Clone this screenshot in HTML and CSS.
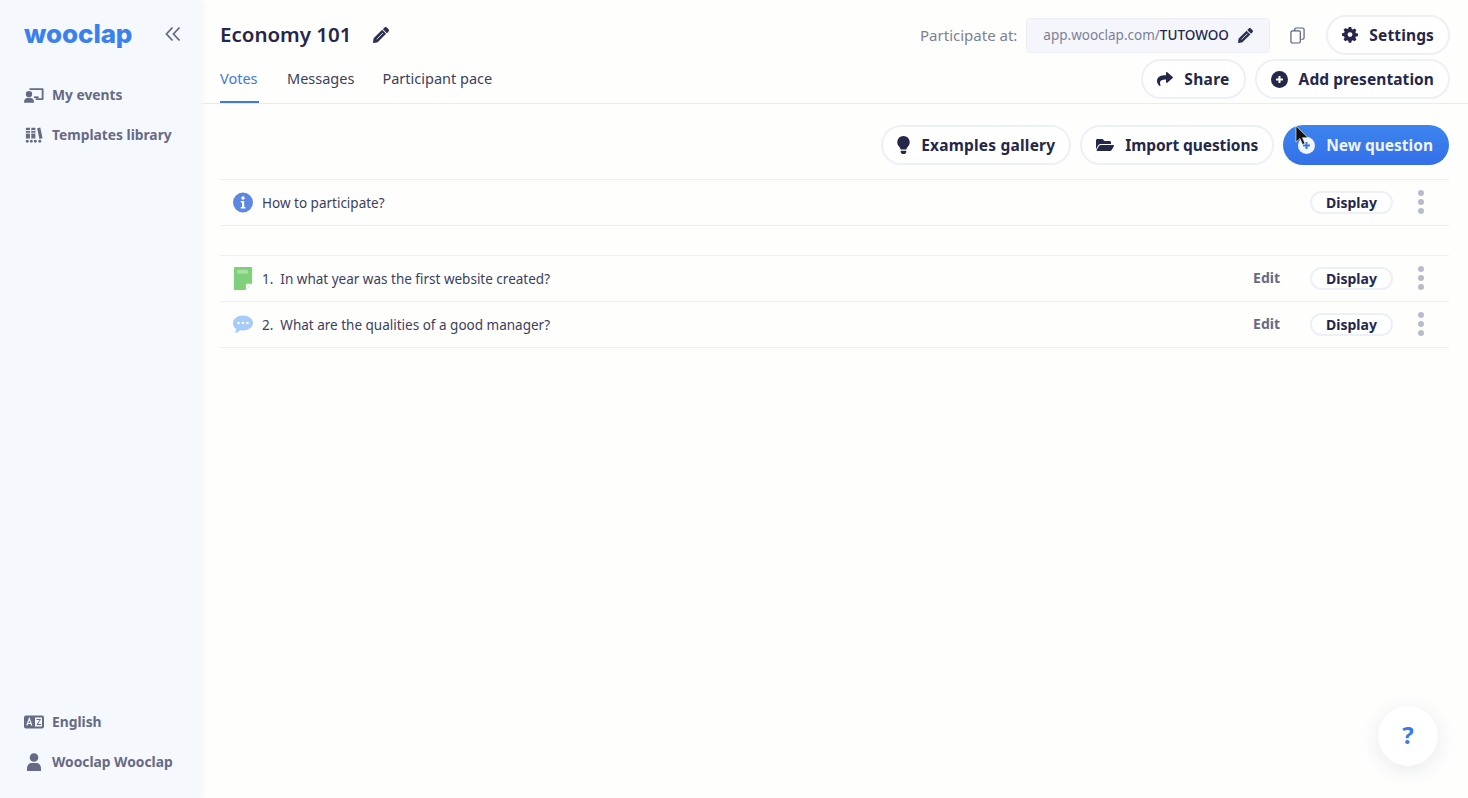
FILE: index.html
```html
<!DOCTYPE html>
<html lang="en">
<head>
<meta charset="utf-8">
<title>Wooclap - Economy 101</title>
<link rel="stylesheet" href="styles.css">
</head>
<body>
<div class="app">
  <aside class="sidebar">
    <div class="brand">
      <span class="logo">wooclap</span>
      <svg class="collapse" viewBox="0 0 16 16" width="16" height="16"><path d="M7.500 1.500 1.500 8l6 6.500M14.500 1.500 8.500 8l6 6.500" fill="none" stroke="#666a85" stroke-width="1.800"/></svg>
    </div>
    <nav class="side-nav">
      <a class="side-link">
        <svg class="side-icon" viewBox="0 0 22 18"><path d="M6 1.500h14.500a1 1 0 0 1 1 1v11a1 1 0 0 1-1 1H13v-2h6.500V3.500H6z" fill="#666a85"/><circle cx="5.500" cy="8" r="3.500" fill="#666a85"/><path d="M0 17c0-3.500 2-5 5.500-5s5.500 1.500 5.500 5v.500H0z" fill="#666a85"/><rect x="11" y="10.500" width="5" height="2" fill="#666a85"/></svg>
        <span>My events</span>
      </a>
      <a class="side-link">
        <svg class="side-icon side-icon-narrow" viewBox="0 0 20 18"><path d="M1 1h4.500v12H1zM7 1h4.500v12H7zM13.500 1.500l3.500-.8 2.500 12-3.500.8z" fill="#666a85"/><path d="M1 4h4.500M1 7h4.500M7 4h4.500M7 7h4.500" stroke="#f5f8fd" stroke-width="1"/><circle cx="2.500" cy="16" r="1.600" fill="#666a85"/><circle cx="7" cy="16" r="1.600" fill="#666a85"/><circle cx="11.500" cy="16" r="1.600" fill="#666a85"/><circle cx="16.500" cy="16" r="1.600" fill="#666a85"/></svg>
        <span>Templates library</span>
      </a>
    </nav>
    <nav class="side-nav side-bottom">
      <a class="side-link">
        <svg class="side-icon" viewBox="0 0 20 13"><rect width="20" height="13" rx="2" fill="#666a85"/><rect x="11" y="2" width="7" height="9" fill="#f5f8fd"/><path d="M2.800 10 5.300 3l2.500 7M3.800 8h3" fill="none" stroke="#f5f8fd" stroke-width="1.200"/><path d="M12.500 4h4l-3.500 5h4" fill="none" stroke="#666a85" stroke-width="1"/></svg>
        <span>English</span>
      </a>
      <a class="side-link">
        <svg class="side-icon" viewBox="0 0 20 18"><circle cx="10" cy="4.500" r="4.300" fill="#666a85"/><path d="M3 18v-2.500C3 12 5 10 8 10h4c3 0 5 2 5 5.500V18z" fill="#666a85"/></svg>
        <span>Wooclap Wooclap</span>
      </a>
    </nav>
  </aside>

  <main class="main">
    <header class="header">
      <div class="header-top">
        <h1 class="title">Economy 101</h1>
        <svg class="edit-title" viewBox="0 0 512 512" width="16" height="16"><path class="pen" d="M497.900 142.100l-46.100 46.100c-4.700 4.700-12.300 4.700-17 0l-111-111c-4.700-4.700-4.700-12.300 0-17l46.100-46.100c18.700-18.700 49.100-18.700 67.900 0l60.100 60.100c18.800 18.700 18.800 49.100 0 67.900zM284.200 99.800L21.600 362.400.4 483.900c-2.900 16.400 11.400 30.600 27.800 27.800l121.500-21.300 262.600-262.600c4.700-4.700 4.700-12.300 0-17l-111-111c-4.800-4.700-12.400-4.700-17.100 0z"/><path class="pen-line" d="M120 392 320 192"/></svg>
        <div class="participate">
          <span class="participate-label">Participate at:</span>
          <div class="url-box">
            <span class="url-host">app.wooclap.com/</span><span class="url-code">TUTOWOO</span>
            <svg class="url-pen" viewBox="0 0 512 512" width="15" height="15"><path class="pen" d="M497.900 142.100l-46.100 46.100c-4.700 4.700-12.300 4.700-17 0l-111-111c-4.700-4.700-4.700-12.300 0-17l46.100-46.100c18.700-18.700 49.100-18.700 67.900 0l60.100 60.100c18.800 18.700 18.800 49.100 0 67.900zM284.200 99.800L21.600 362.400.4 483.900c-2.900 16.400 11.400 30.600 27.800 27.800l121.500-21.300 262.600-262.600c4.700-4.700 4.700-12.300 0-17l-111-111c-4.800-4.700-12.400-4.700-17.100 0z"/><path class="pen-line" d="M120 392 320 192"/></svg>
          </div>
          <svg class="copy" viewBox="0 0 16 18" width="15" height="17"><path d="M5 3.500V2.500A1.500 1.500 0 0 1 6.500 1h7A1.500 1.500 0 0 1 15 2.500v9a1.500 1.500 0 0 1-1.500 1.500H12M2.500 4h7A1.500 1.500 0 0 1 11 5.500v10A1.500 1.500 0 0 1 9.500 17h-7A1.500 1.500 0 0 1 1 15.500v-10A1.500 1.500 0 0 1 2.500 4z" fill="none" stroke="#5b5f7a" stroke-width="1.300"/></svg>
          <button class="btn text-settings">
            <svg class="btn-icon" viewBox="0 0 20 20"><path d="M8.300 0h3.400l.6 2.800 1.500.7 2.500-1.400 2.400 2.400-1.500 2.400.7 1.600 2.800.6v3.400l-2.800.6-.7 1.500 1.500 2.500-2.400 2.400-2.500-1.500-1.500.6-.6 2.800H8.300l-.6-2.800-1.500-.6-2.500 1.500-2.400-2.400 1.500-2.500-.7-1.500L-.7 11.900V8.500l2.800-.6.7-1.600-1.500-2.400 2.400-2.400 2.500 1.400 1.500-.7z" transform="translate(.7 -.2) scale(.93)"/><circle cx="10" cy="9.500" r="3" fill="#fff"/></svg>
            Settings
          </button>
        </div>
      </div>
      <div class="header-bottom">
        <div class="tabs">
          <a class="tab tab-active">Votes</a>
          <a class="tab">Messages</a>
          <a class="tab">Participant pace</a>
        </div>
        <div class="header-actions">
          <button class="btn text-loose-sm">
            <svg class="btn-icon" viewBox="0 0 512 512"><path d="M503.700 189.800L327.700 37.900C312.300 24.500 288 35.300 288 56v80.100C127.400 137.900 0 170.100 0 322.300c0 61.400 39.600 122.300 83.300 154.100 13.700 9.900 33.100-2.500 28.100-18.600C66 312.800 132.900 274.300 288 272.100V360c0 20.700 24.300 31.500 39.700 18.200l176-152c11.100-9.600 11.100-26.800 0-36.400z"/></svg>
            Share
          </button>
          <button class="btn text-add">
            <svg class="btn-icon btn-icon-circle" viewBox="1.500 1.500 17 17"><circle cx="10" cy="10" r="8.500"/><path d="M10 6.500v7M6.500 10h7" stroke="#fff" stroke-width="2"/></svg>
            Add presentation
          </button>
        </div>
      </div>
    </header>

    <div class="toolbar">
      <button class="btn text-loose">
        <svg class="btn-icon btn-icon-slim" viewBox="0 0 352 512"><path d="M96.060 454.350c.01 6.290 1.870 12.450 5.370 17.690l17.090 25.690a31.990 31.990 0 0 0 26.640 14.280h61.710a31.990 31.990 0 0 0 26.640-14.280l17.090-25.690a31.890 31.890 0 0 0 5.360-17.690l.04-38.350H96.010l.05 38.350zM0 176c0 44.370 16.450 84.850 43.560 115.780 16.520 18.850 42.360 58.230 52.210 91.450.04.260.07.520.11.780h160.240c.04-.26.070-.51.110-.78 9.850-33.220 35.690-72.600 52.210-91.450C335.550 260.850 352 220.370 352 176 352 78.610 272.900-.3 175.450 0 73.440.31 0 82.970 0 176z"/></svg>
        Examples gallery
      </button>
      <button class="btn text-tight">
        <svg class="btn-icon btn-icon-wide" viewBox="0 0 576 512"><path d="M572.694 292.093L500.270 416.248A63.997 63.997 0 0 1 444.989 448H45.025c-18.523 0-30.064-20.093-20.731-36.093l72.424-124.155A64 64 0 0 1 152 256h399.964c18.523 0 30.064 20.093 20.730 36.093zM152 224h328v-48c0-26.510-21.490-48-48-48H272l-64-64H48C21.490 64 0 85.490 0 112v278.046l69.077-118.418C86.214 242.250 117.989 224 152 224z"/></svg>
        Import questions
      </button>
      <button class="btn btn-primary">
        <svg class="btn-icon btn-icon-circle" viewBox="1.500 1.500 17 17"><circle class="plus-disc" cx="10" cy="10" r="8.500"/><path d="M10 6.500v7M6.500 10h7" stroke="#3a78ea" stroke-width="2"/></svg>
        New question
        <svg class="cursor" viewBox="0 0 14 20" width="14" height="20"><path d="M1 0v16l4-3.500 2.500 6 2.500-1-2.500-5.800H13z" fill="#111" stroke="#fff" stroke-width=".6"/></svg>
      </button>
    </div>

    <section class="list list-intro">
      <div class="row">
        <svg class="row-icon" viewBox="0 0 20 20"><circle cx="10" cy="10" r="10" fill="#5d87e0"/><circle cx="10" cy="5.500" r="1.700" fill="#fff"/><path d="M7.800 8.500h3.400v6h1.200v1.500H7.800v-1.500H9V10H7.800z" fill="#fff"/></svg>
        <span class="row-text">How to participate?</span>
        <button class="display">Display</button>
        <span class="dots"><i></i><i></i><i></i></span>
      </div>
    </section>

    <section class="list">
      <div class="row">
        <svg class="row-icon" viewBox="0 0 20 24"><path d="M1.500 0h17a1 1 0 0 1 1 1v16.500L13 24H1.500a1 1 0 0 1-1-1V1a1 1 0 0 1 1-1z" fill="#7ed07a"/><rect x="4" y="3" width="11" height="4" fill="#a8dfa3"/><path d="M13 24v-5.500a1 1 0 0 1 1-1h5.500z" fill="#f2faf1"/></svg>
        <span class="row-text"><span class="num">1.</span>In what year was the first website created?</span>
        <a class="edit">Edit</a>
        <button class="display">Display</button>
        <span class="dots"><i></i><i></i><i></i></span>
      </div>
      <div class="row">
        <svg class="row-icon" viewBox="0 0 20 18"><path d="M10 0c5.500 0 10 3.300 10 7.500S15.500 15 10 15c-1 0-2-.1-2.900-.3C5.500 16.500 3.500 17.500 1.500 17.500c1-1 1.700-2.300 1.800-3.900C1.300 12.200 0 10 0 7.500 0 3.300 4.500 0 10 0z" fill="#a6cbf8"/><circle cx="5.500" cy="7.500" r="1.300" fill="#fff"/><circle cx="10" cy="7.500" r="1.300" fill="#fff"/><circle cx="14.500" cy="7.500" r="1.300" fill="#fff"/></svg>
        <span class="row-text"><span class="num">2.</span>What are the qualities of a good manager?</span>
        <a class="edit">Edit</a>
        <button class="display">Display</button>
        <span class="dots"><i></i><i></i><i></i></span>
      </div>
    </section>

    <button class="help">?</button>
  </main>
</div>
</body>
</html>
```
FILE: styles.css
```css
* { box-sizing: border-box; }
html, body { margin: 0; height: 100%; }
body {
  font-family: "Noto Sans", "Open Sans", sans-serif;
  color: #24274a;
  background: #fefefd;
  overflow: hidden;
}
.app { display: flex; height: 798px; }

/* Sidebar */
.sidebar {
  width: 201px;
  flex: none;
  display: flex;
  flex-direction: column;
  background: #f5f8fd;
  box-shadow: 2px 0 8px rgba(40, 50, 90, .04);
  padding: 0 0 25px 24px;
}
.brand { display: flex; align-items: center; height: 68px; }
.logo {
  font-family: "Inter", "Noto Sans", sans-serif;
  font-weight: 800;
  font-size: 26px;
  letter-spacing: -.1px;
  color: #3b80ec;
  width: 141px;
  padding-bottom: 1px;
}
.side-nav { display: flex; flex-direction: column; gap: 18px; padding-top: 16px; }
.side-bottom { margin-top: auto; padding-top: 0; }
.side-link {
  display: flex;
  align-items: center;
  gap: 8px;
  height: 22px;
  font-size: 13.800px;
  font-weight: 700;
  color: #666a85;
  white-space: nowrap;
}
.side-link span { margin-top: -2px; }
.side-icon { width: 20px; height: 18px; flex: none; }
.side-icon-narrow { width: 18px; margin: 0 1px; }

/* Main */
.main { flex: 1; min-width: 0; position: relative; padding: 0 19px; }
.header {
  margin: 0 -19px;
  padding: 15px 18px 0 19px;
  height: 104px;
  border-bottom: 1px solid #e9ebf3;
}
.header-top { display: flex; align-items: center; height: 40px; }
.title { margin: 0; padding-bottom: 2px; font-size: 20.500px; font-weight: 600; color: #24274a; }
.edit-title { margin-left: 21px; }
.pen { fill: #2d3050; }
.pen-line { fill: none; stroke: #fff; stroke-width: 26; }
.participate { margin-left: auto; display: flex; align-items: center; }
.participate-label { font-size: 15px; color: #7d8098; margin-right: 9px; }
.url-box {
  display: flex;
  align-items: center;
  height: 35px;
  width: 244px;
  padding: 0 16px 0 16px;
  background: #f4f6fb;
  border: 1px solid #eef0f6;
  border-radius: 4px;
  font-size: 13.500px;
  white-space: nowrap;
}
.url-host { color: #7d8098; }
.url-code { color: #24274a; font-weight: 500; }
.url-pen { margin-left: auto; }
.copy { margin: 0 21px 0 20px; }
.header-bottom { display: flex; align-items: flex-start; justify-content: space-between; height: 40px; margin-top: 4px; }
.tabs { display: flex; gap: 28px; height: 44px; }
.tab {
  display: flex;
  align-items: center;
  height: 44px;
  font-size: 14.500px;
  color: #3b3e5e;
  border-bottom: 2px solid transparent;
  padding-bottom: 5px;
}
.tab-active { min-width: 39px; color: #3f78e0; border-bottom-color: #3f78e0; }
.header-actions { display: flex; gap: 9px; }

.btn {
  position: relative;
  display: inline-flex;
  align-items: center;
  gap: 11px;
  height: 40px;
  padding: 0 14px;
  background: #fff;
  border: 2px solid #eef0f7;
  border-radius: 20px;
  font: 700 15.500px "Noto Sans", "Open Sans", sans-serif;
  color: #24274a;
  white-space: nowrap;
}
.text-loose { letter-spacing: .2px; }
.text-loose-sm { letter-spacing: .3px; }
.text-tight { letter-spacing: -.08px; }
.text-settings { letter-spacing: .14px; }
.text-add { letter-spacing: .07px; }
.btn-icon { width: 16px; height: 16px; fill: #24274a; flex: none; }
.btn-icon-circle { width: 17px; height: 17px; }
.btn-icon-slim { width: 13px; height: 18px; }
.btn-icon-wide { width: 18px; }
.btn-primary {
  background: linear-gradient(#3d84ee, #3470e8);
  border: 0;
  color: #eef4fe;
  padding: 0 16px 0 15px;
}
.plus-disc { fill: #f0f5fe; }
.cursor { position: absolute; left: 12px; top: 1px; }

.toolbar { display: flex; justify-content: flex-end; gap: 9px; padding: 21px 0 14px; }

/* Lists */
.list { border-top: 1px solid #eceef5; }
.list-intro { margin-bottom: 29px; }
.row {
  display: flex;
  align-items: center;
  height: 46px;
  padding: 0 25px 1px 13px;
  border-bottom: 1px solid #eceef5;
}
.row-icon { width: 20px; height: 23px; flex: none; margin-right: 9px; }
.row-text { padding-top: 2px; font-size: 13.500px; color: #3b3e5e; margin-right: auto; }
.num { margin-right: 7px; }
.edit { padding-bottom: 2px; font-size: 14px; font-weight: 700; color: #666a85; margin-right: 30px; }
.display {
  width: 83px;
  height: 23px;
  padding: 0 0 2px;
  background: #fff;
  border: 2px solid #eef0f7;
  border-radius: 12px;
  font: 700 14px "Noto Sans", "Open Sans", sans-serif;
  color: #24274a;
}
.dots { display: flex; flex-direction: column; gap: 3px; margin-left: 25px; }
.dots i { width: 6px; height: 6px; border-radius: 50%; background: #b9bbc9; }

.help {
  position: absolute;
  left: 1177px;
  top: 706px;
  width: 60px;
  height: 60px;
  padding: 0 0 3px;
  border: 0;
  border-radius: 50%;
  background: #fff;
  box-shadow: 0 4px 20px rgba(40, 50, 90, .1);
  font: 700 24px "Noto Sans", sans-serif;
  color: #3b78e8;
}
```
